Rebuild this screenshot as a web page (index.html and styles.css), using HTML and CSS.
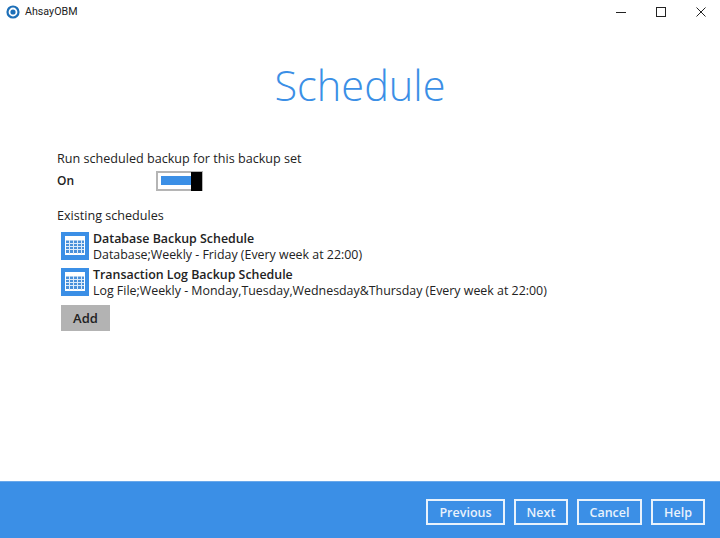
FILE: index.html
```html
<!DOCTYPE html>
<html>
<head>
<meta charset="utf-8">
<title>AhsayOBM</title>
<link rel="stylesheet" href="styles.css">
</head>
<body>
<div class="app">
  <header class="titlebar">
    <svg class="logo" width="14" height="14" viewBox="0 0 14 14"><circle cx="7" cy="7" r="5.5" fill="none" stroke="#1d6fb8" stroke-width="2.2"/><circle cx="7" cy="7" r="2.6" fill="#1d6fb8"/></svg>
    <span class="apptitle">AhsayOBM</span>
    <div class="winctl">
      <svg width="10" height="10" viewBox="0 0 10 10"><path d="M0 5.500H10" stroke="#222" stroke-width="1"/></svg>
      <svg width="10" height="10" viewBox="0 0 10 10"><rect x="0.500" y="0.500" width="9" height="9" fill="none" stroke="#222" stroke-width="1"/></svg>
      <svg width="10" height="10" viewBox="0 0 10 10"><path d="M0.500 0.500L9.500 9.500M9.500 0.500L0.500 9.500" stroke="#222" stroke-width="1"/></svg>
    </div>
  </header>
  <main class="content">
    <h1 class="heading">Schedule</h1>
    <p class="label">Run scheduled backup for this backup set</p>
    <div class="togglerow">
      <span class="state">On</span>
      <div class="toggle"><div class="fill"></div><div class="knob"></div></div>
    </div>
    <p class="label existing">Existing schedules</p>
    <div class="list">
      <div class="item">
        <svg class="calicon" width="28" height="28" viewBox="0 0 28 28"><rect width="28" height="28" fill="#3b8fe6"/><rect x="4" y="4" width="20" height="19" fill="#fff"/><path d="M5 8.500H23V21H5Z" fill="#4a90d9"/><path d="M5 11.500H23M5 14.500H23M5 17.500H23M8.500 8V22M12.500 8V22M16.500 8V22M20.500 8V22" stroke="#dcebfa" stroke-width="1" fill="none"/></svg>
        <div class="itemtext"><div class="itemtitle">Database Backup Schedule</div><div class="itemsub">Database;Weekly - Friday (Every week at 22:00)</div></div>
      </div>
      <div class="item">
        <svg class="calicon" width="28" height="28" viewBox="0 0 28 28"><rect width="28" height="28" fill="#3b8fe6"/><rect x="4" y="4" width="20" height="19" fill="#fff"/><path d="M5 8.500H23V21H5Z" fill="#4a90d9"/><path d="M5 11.500H23M5 14.500H23M5 17.500H23M8.500 8V22M12.500 8V22M16.500 8V22M20.500 8V22" stroke="#dcebfa" stroke-width="1" fill="none"/></svg>
        <div class="itemtext"><div class="itemtitle">Transaction Log Backup Schedule</div><div class="itemsub">Log File;Weekly - Monday,Tuesday,Wednesday&amp;Thursday (Every week at 22:00)</div></div>
      </div>
    </div>
    <button class="add">Add</button>
  </main>
  <footer class="footer">
    <button class="navbtn prev">Previous</button>
    <button class="navbtn next">Next</button>
    <button class="navbtn cancel">Cancel</button>
    <button class="navbtn help">Help</button>
  </footer>
</div>
</body>
</html>
```
FILE: styles.css
```css
* { box-sizing: border-box; }
html, body { margin: 0; padding: 0; }
body { width: 720px; height: 538px; overflow: hidden; background: #fff; font-family: "Open Sans", "Noto Sans", sans-serif; color: #222; }
.app { display: flex; flex-direction: column; height: 538px; }
.titlebar { height: 23px; display: flex; align-items: center; padding-left: 6px; }
.logo { margin-right: 5px; }
.apptitle { font-size: 10.700px; color: #222; font-family: Roboto, "Open Sans", sans-serif; }
.winctl { margin-left: auto; display: flex; gap: 30px; padding-right: 14px; }
.winctl svg { display: block; }
.content { flex: 1; padding: 0 0 0 57px; min-height: 0; }
.heading { margin: 14px 0 0 -57px; text-align: center; font-weight: 300; font-size: 41.500px; line-height: 97px; height: 113px; color: #3b8fe6; }
.label { margin: 0; font-size: 12.600px; line-height: 17px; }
.togglerow { display: flex; align-items: center; height: 23px; margin-top: 2px; }
.state { width: 99px; font-size: 12px; font-weight: 600; }
.toggle { position: relative; width: 47px; height: 20px; border: 2px solid #b5b5b5; background: #fff; }
.fill { position: absolute; left: 3px; top: 3px; width: 34px; height: 9px; background: #3b8fe6; }
.knob { position: absolute; right: -1px; top: -1px; width: 11px; height: 19px; background: #000; }
.existing { margin-top: 15px; }
.list { margin: 8px 0 0 4px; display: flex; flex-direction: column; gap: 8px; }
.item { display: flex; height: 28px; align-items: center; gap: 4px; }
.calicon { flex: none; }
.itemtitle { font-size: 12.400px; line-height: 15px; font-weight: 600; }
.itemsub { font-size: 12.400px; line-height: 17px; }
.itemtext { margin-top: 1px; }
.add { display: block; margin: 9px 0 0 4px; width: 49px; height: 26px; padding: 0; background: #b3b3b3; border: 0; font: 600 13px "Open Sans", sans-serif; color: #222; }
.footer { height: 57px; background: #3b8fe6; border-top: 1px solid #6aa8ea; display: flex; justify-content: flex-end; align-items: flex-start; gap: 9px; padding: 17px 15px 0 0; }
.navbtn { height: 26px; padding: 0; background: transparent; border: 2px solid #e8f2fc; color: #e8f2fc; font: 600 12.500px "Open Sans", sans-serif; }
.prev { width: 79px; }
.next { width: 54px; }
.cancel { width: 65px; }
.help { width: 54px; }
```
